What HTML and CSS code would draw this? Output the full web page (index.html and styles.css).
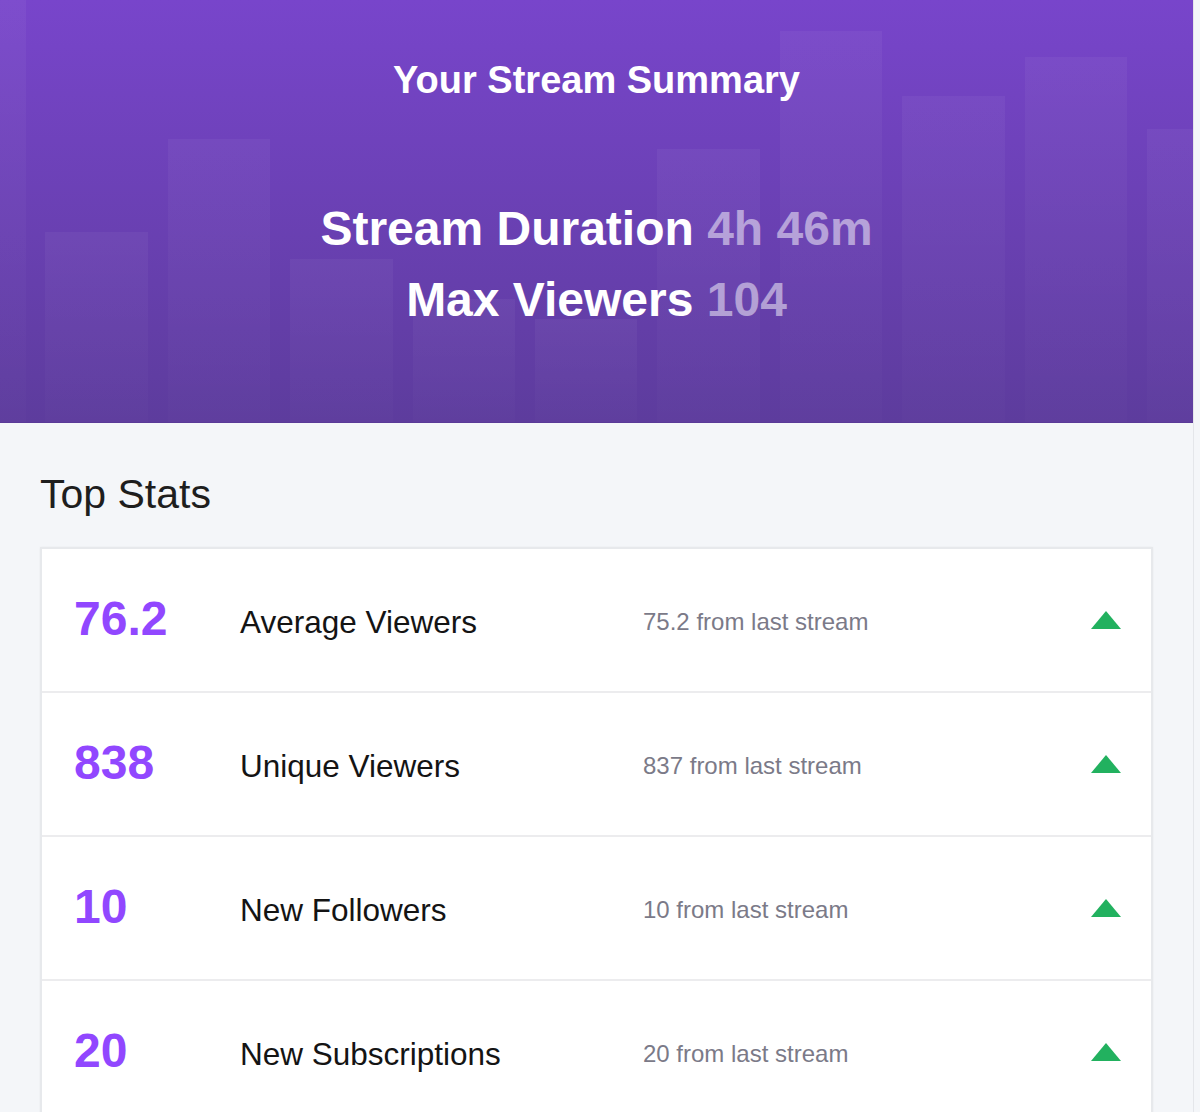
FILE: index.html
```html
<!DOCTYPE html>
<html>
<head>
  <title>Stream Summary</title>
  <link rel="stylesheet" href="styles.css">
</head>
<body>

<div class="page">
  <div class="hero">
    <div class="bars">
      <div class="bar" style="height:423px"></div>
      <div class="bar" style="height:190px"></div>
      <div class="bar" style="height:283px"></div>
      <div class="bar" style="height:163px"></div>
      <div class="bar" style="height:123px"></div>
      <div class="bar" style="height:103px"></div>
      <div class="bar" style="height:273px"></div>
      <div class="bar" style="height:391px"></div>
      <div class="bar" style="height:326px"></div>
      <div class="bar" style="height:365px"></div>
      <div class="bar" style="height:293px"></div>
    </div>
    <h1 class="hero-title">Your Stream Summary</h1>
    <div class="hero-stats">
      <div class="hero-line">Stream Duration <span class="hero-value">4h 46m</span></div>
      <div class="hero-line">Max Viewers <span class="hero-value">104</span></div>
    </div>
  </div>

  <div class="section">
    <h2 class="section-title">Top Stats</h2>
    <div class="card">
      <div class="stat-row">
        <div class="stat-num">76.2</div>
        <div class="stat-label">Average Viewers</div>
        <div class="stat-delta">75.2 from last stream</div>
        <svg class="arrow" width="30" height="18" viewBox="0 0 30 18"><polygon points="15,0 30,18 0,18" fill="#22b15f"/></svg>
      </div>
      <div class="stat-row">
        <div class="stat-num">838</div>
        <div class="stat-label">Unique Viewers</div>
        <div class="stat-delta">837 from last stream</div>
        <svg class="arrow" width="30" height="18" viewBox="0 0 30 18"><polygon points="15,0 30,18 0,18" fill="#22b15f"/></svg>
      </div>
      <div class="stat-row">
        <div class="stat-num">10</div>
        <div class="stat-label">New Followers</div>
        <div class="stat-delta">10 from last stream</div>
        <svg class="arrow" width="30" height="18" viewBox="0 0 30 18"><polygon points="15,0 30,18 0,18" fill="#22b15f"/></svg>
      </div>
      <div class="stat-row">
        <div class="stat-num">20</div>
        <div class="stat-label">New Subscriptions</div>
        <div class="stat-delta">20 from last stream</div>
        <svg class="arrow" width="30" height="18" viewBox="0 0 30 18"><polygon points="15,0 30,18 0,18" fill="#22b15f"/></svg>
      </div>
    </div>
  </div>
</div>

</body>
</html>
```

FILE: styles.css
```css
body { margin: 0; background: #f4f6f9; font-family: "Liberation Sans", Arial, sans-serif; }
.page { width: 1193px; border-right: 1px solid #e4e6ea; min-height: 1112px; }

/* header */
.hero { position: relative; height: 423px; overflow: hidden; text-align: center; color: #fff;
  background: linear-gradient(#7845cb, #5d3c9d); border-bottom: 1px solid #5a3a98; box-sizing: border-box; }
.bars { position: absolute; left: -77px; right: 0; bottom: 0; height: 100%; display: flex; align-items: flex-end; gap: 19.9px; }
.bar { flex: 0 0 102.5px; background: linear-gradient(rgba(255,255,255,0.045), rgba(255,255,255,0.012)); }
.hero-title { position: relative; margin: 0; padding-top: 58px; font-size: 38px; line-height: 44px; font-weight: bold; }
.hero-stats { position: relative; margin-top: 91px; }
.hero-line { font-size: 48px; line-height: 71px; font-weight: bold; }
.hero-value { color: rgba(255,255,255,0.5); }

/* top stats */
.section { padding: 0 40px; }
.section-title { margin: 47px 0 29px; font-size: 41px; line-height: 48px; font-weight: normal; color: #1e1e1e; }
.card { background: #fff; border: 2px solid #e7e9ec; border-bottom: 0; box-shadow: 0 0 2px rgba(0,0,0,0.05); }
.stat-row { display: grid; grid-template-columns: 165px 403px 1fr 30px; align-items: center; height: 142px;
  padding: 0 30px 0 33px; border-bottom: 2px solid #ececee; }
.stat-num { font-size: 48px; font-weight: bold; color: #9147ff; margin-top: -4px; margin-left: -1px; }
.stat-label { font-size: 31.5px; color: #141414; padding-top: 4px; }
.stat-delta { font-size: 24px; color: #7b7a88; padding-top: 4px; }
.arrow { display: block; }
```
